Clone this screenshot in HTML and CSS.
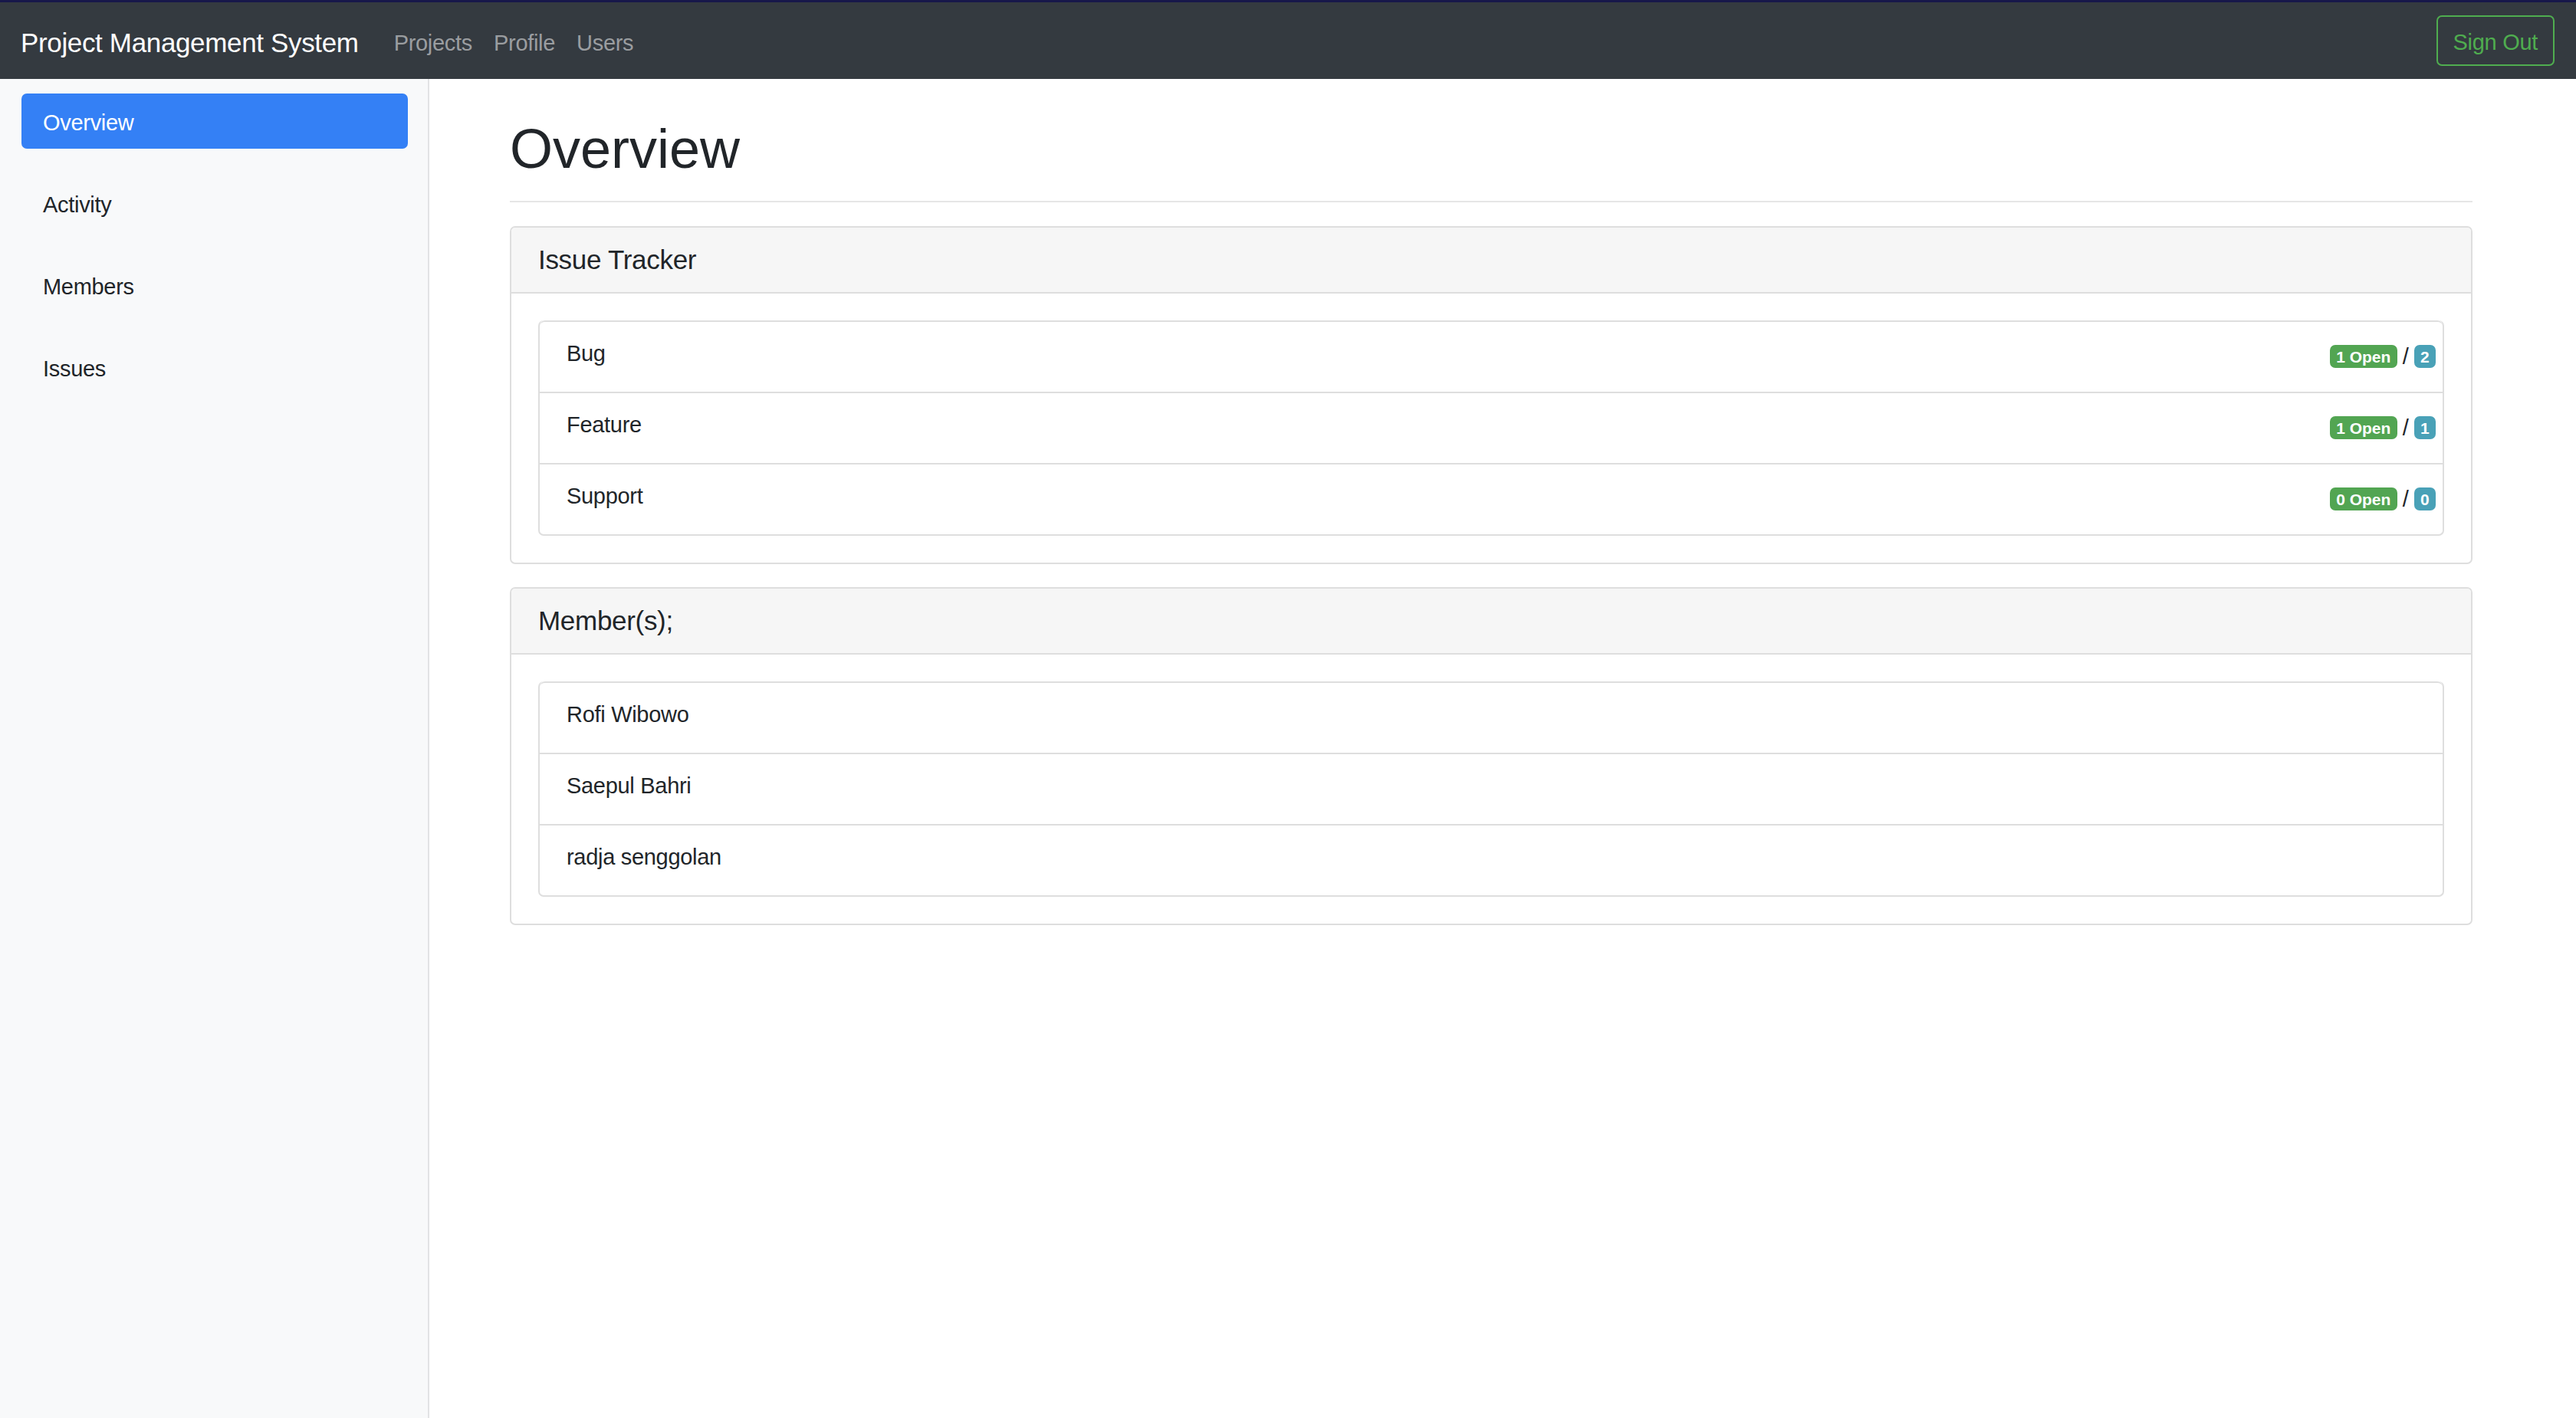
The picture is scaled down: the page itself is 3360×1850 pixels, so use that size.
FILE: index.html
```html
<!DOCTYPE html>
<html lang="en">
<head>
<meta charset="utf-8">
<title>Project Management System</title>
<link rel="stylesheet" href="styles.css">
</head>
<body>
<div class="topstrip"></div>
<nav class="navbar">
  <a class="brand" href="#">Project Management System</a>
  <ul class="nav-links">
    <li><a href="#">Projects</a></li>
    <li><a href="#">Profile</a></li>
    <li><a href="#">Users</a></li>
  </ul>
  <button class="btn-signout" type="button">Sign Out</button>
</nav>
<div class="layout">
  <aside class="sidebar">
    <ul class="side-nav">
      <li><a class="side-link active" href="#">Overview</a></li>
      <li><a class="side-link" href="#">Activity</a></li>
      <li><a class="side-link" href="#">Members</a></li>
      <li><a class="side-link" href="#">Issues</a></li>
    </ul>
  </aside>
  <main class="main">
    <div class="page-header"><h1>Overview</h1></div>
    <section class="card">
      <div class="card-header"><h5>Issue Tracker</h5></div>
      <div class="card-body">
        <ul class="list-group">
          <li class="list-item"><span class="item-name">Bug</span><span class="counts"><span class="badge badge-green">1 Open</span><span class="slash">/</span><span class="badge badge-blue">2</span></span></li>
          <li class="list-item"><span class="item-name">Feature</span><span class="counts"><span class="badge badge-green">1 Open</span><span class="slash">/</span><span class="badge badge-blue">1</span></span></li>
          <li class="list-item"><span class="item-name">Support</span><span class="counts"><span class="badge badge-green">0 Open</span><span class="slash">/</span><span class="badge badge-blue">0</span></span></li>
        </ul>
      </div>
    </section>
    <section class="card">
      <div class="card-header"><h5>Member(s);</h5></div>
      <div class="card-body">
        <ul class="list-group">
          <li class="list-item"><span class="item-name">Rofi Wibowo</span></li>
          <li class="list-item"><span class="item-name">Saepul Bahri</span></li>
          <li class="list-item"><span class="item-name">radja senggolan</span></li>
        </ul>
      </div>
    </section>
  </main>
</div>
</body>
</html>
```

FILE: styles.css
```css
* { box-sizing: border-box; }

html, body {
  margin: 0;
  padding: 0;
}

body {
  font-family: "Liberation Sans", Arial, sans-serif;
  font-size: 29px;
  line-height: 42px;
  letter-spacing: -0.3px;
  color: #212529;
  background: #ffffff;
  min-height: 1850px;
  display: flex;
  flex-direction: column;
}

.topstrip {
  height: 3px;
  background: #17174a;
}

.navbar {
  height: 100px;
  background: #343a40;
  display: flex;
  align-items: center;
  padding: 0 28px 0 27px;
}

.brand {
  color: #ffffff;
  text-decoration: none;
  font-size: 35px;
  letter-spacing: -0.35px;
  line-height: 42px;
  padding-top: 6px;
  margin-right: 32px;
}

.nav-links {
  list-style: none;
  margin: 0;
  padding: 0;
  display: flex;
  flex: 1;
}

.nav-links a {
  display: block;
  padding: 5px 14px 0;
  color: #9a9da0;
  text-decoration: none;
  line-height: 42px;
}

.btn-signout {
  font-family: inherit;
  font-size: 29px;
  letter-spacing: -0.3px;
  line-height: 42px;
  color: #4fad4f;
  background: transparent;
  border: 2px solid #4fad4f;
  border-radius: 7px;
  padding: 12px 20px 8px;
  height: 66px;
}

.layout {
  flex: 1;
  display: flex;
}

.sidebar {
  width: 560px;
  flex: 0 0 560px;
  background: #f8f9fa;
  border-right: 2px solid #e2e3e5;
  padding: 19px 26px 0 28px;
}

.side-nav {
  list-style: none;
  margin: 0;
  padding: 0;
}

.side-nav li {
  margin-bottom: 35px;
}

.side-link {
  display: block;
  padding: 17px 28px 13px;
  line-height: 42px;
  color: #212529;
  text-decoration: none;
  border-radius: 7px;
}

.side-link.active {
  background: #3480f5;
  color: #ffffff;
}

.main {
  flex: 1;
  padding: 49px 135px 0 105px;
}

.page-header {
  border-bottom: 2px solid #e6e6e6;
  padding-bottom: 26px;
  margin-bottom: 31px;
}

.page-header h1 {
  margin: 0;
  font-size: 72px;
  letter-spacing: 0;
  line-height: 84px;
  font-weight: 400;
  color: #212529;
}

.card {
  border: 2px solid #dedede;
  border-radius: 7px;
  margin-bottom: 30px;
  background: #ffffff;
}

.card-header {
  background: #f6f6f6;
  border-bottom: 2px solid #dedede;
  padding: 21px 35px;
  border-radius: 5px 5px 0 0;
}

.card-header h5 {
  margin: 0;
  font-size: 35px;
  letter-spacing: -0.3px;
  line-height: 42px;
  font-weight: 400;
}

.card-body {
  padding: 35px;
}

.list-group {
  list-style: none;
  margin: 0;
  padding: 0;
  border: 2px solid #dedede;
  border-top: none;
  border-radius: 7px;
}

.list-item {
  display: flex;
  justify-content: space-between;
  align-items: flex-start;
  padding: 20px 9px 29px 35px;
  border-top: 2px solid #dedede;
  line-height: 42px;
}

.list-item:first-child {
  border-radius: 7px 7px 0 0;
}

.counts {
  display: flex;
  align-items: center;
  height: 30px;
  margin-top: 10px;
}

.slash {
  margin: 0 7px;
  line-height: 30px;
}

.badge {
  display: inline-block;
  font-size: 21px;
  font-weight: 700;
  letter-spacing: 0;
  line-height: 21px;
  padding: 4.5px 8.4px;
  border-radius: 7px;
  color: #ffffff;
}

.badge-green { background: #52a552; }
.badge-blue { background: #49a1b7; }
```
